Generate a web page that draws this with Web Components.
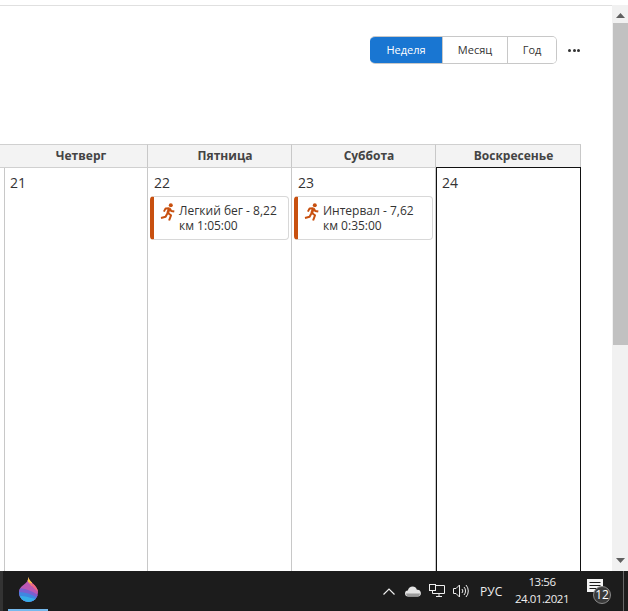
<!DOCTYPE html>
<html lang="ru">
<head>
<meta charset="utf-8">
<title>Календарь</title>
<style>
  html, body { margin: 0; height: 100%; overflow: hidden; background: #fff; }
  body { font-family: "Open Sans", "Noto Sans", sans-serif; color: #333; }
</style>
</head>
<body>
<app-screen>
  <view-switch slot="toolbar"></view-switch>
  <week-grid slot="content">
    <day-column name="" num="" clipped></day-column>
    <day-column name="Четверг" num="21"></day-column>
    <day-column name="Пятница" num="22">
      <run-event>Легкий бег - 8,22 км 1:05:00</run-event>
    </day-column>
    <day-column name="Суббота" num="23">
      <run-event>Интервал - 7,62 км 0:35:00</run-event>
    </day-column>
    <day-column name="Воскресенье" num="24" today></day-column>
  </week-grid>
  <page-scrollbar slot="scrollbar"></page-scrollbar>
  <win-taskbar slot="taskbar"></win-taskbar>
</app-screen>

<script>
// Outer frame: page area with scrollbar above the Windows taskbar
class AppScreen extends HTMLElement {
    constructor() {
        super();
        this.attachShadow({ mode: 'open' }).innerHTML = `
            <style>
                :host { display: flex; flex-direction: column; width: 628px; height: 611px; }
                .top { flex: 1; min-height: 0; display: flex; }
                .page { flex: 1; min-width: 0; display: flex; flex-direction: column; overflow: hidden; border-top: 1px solid #e0e0e0; margin-top: 5px; }
                .tools { height: 138px; flex: none; padding: 30px 32px 0 0; box-sizing: border-box; display: flex; justify-content: flex-end; align-items: flex-start; }
                .body { flex: 1; min-height: 0; }
            </style>
            <div class="top">
                <div class="page">
                    <div class="tools"><slot name="toolbar"></slot></div>
                    <div class="body"><slot name="content"></slot></div>
                </div>
                <slot name="scrollbar"></slot>
            </div>
            <slot name="taskbar"></slot>
        `;
    }
}

class ViewSwitch extends HTMLElement {
    constructor() {
        super();
        this.attachShadow({ mode: 'open' }).innerHTML = `
            <style>
                :host { display: flex; align-items: center; font: 11px "Open Sans", sans-serif; color: #333; }
                .group { display: flex; height: 28px; border: 1px solid #c8c8c8; border-left: 0; border-radius: 5px; box-sizing: border-box; overflow: hidden; }
                .group span { display: flex; align-items: center; justify-content: center; box-sizing: border-box; background: #fff; padding: 0 0 2px 0; }
                .group span + span { border-left: 1px solid #c8c8c8; }
                .active { background: #1976d2 !important; color: #fff; margin: -1px 0; }
                .more { display: flex; gap: 1.5px; margin-left: 11px; }
                .more i { width: 3px; height: 3px; border-radius: 50%; background: #333; }
            </style>
            <div class="group">
                <span class="active" style="width:72px">Неделя</span>
                <span style="width:65px">Месяц</span>
                <span style="width:49px">Год</span>
            </div>
            <div class="more"><i></i><i></i><i></i></div>
        `;
    }
}

class WeekGrid extends HTMLElement {
    constructor() {
        super();
        this.attachShadow({ mode: 'open' }).innerHTML = `
            <style>
                :host { display: flex; height: 100%; width: 581px; }
            </style>
            <slot></slot>
        `;
    }
}

class DayColumn extends HTMLElement {
    constructor() {
        super();
        const name = this.getAttribute('name');
        const num = this.getAttribute('num');
        this.attachShadow({ mode: 'open' }).innerHTML = `
            <style>
                :host { display: flex; flex-direction: column; width: 144px; box-sizing: border-box; }
                :host([clipped]) { width: 4px; }
                :host([today]) { width: 145px; }
                .head { height: 24px; box-sizing: border-box; border: solid #d0d0d0; border-width: 1px 1px 1px 0; border-right-color: #c8c8c8; background: #f3f3f3; padding-left: 11px;
                    font: 700 12px/21px "Open Sans", sans-serif; color: #444; text-align: center; white-space: nowrap; overflow: hidden; }
                .cell { flex: 1; box-sizing: border-box; padding: 6px 2px 0 2px; border-right: 1px solid #c8c8c8; }
                .num { font: 14px/18px "Open Sans", sans-serif; color: #333; padding-left: 4px; height: 22px; }
                :host([today]) .cell { border: 1px solid #111; border-bottom: 0; margin-top: -1px; padding: 6px 1px 0 1px; position: relative; }
            </style>
            <div class="head">${name}</div>
            <div class="cell">
                ${num ? `<div class="num">${num}</div>` : ''}
                <slot></slot>
            </div>
        `;
    }
}

class RunEvent extends HTMLElement {
    constructor() {
        super();
        this.attachShadow({ mode: 'open' }).innerHTML = `
            <style>
                :host { display: flex; height: 44px; box-sizing: border-box; border: 1px solid #d8d8d8; border-left: 4px solid #c8500f; border-radius: 4px; background: #fff; padding: 6px 4px 0 6px; gap: 4px;
                    font: 12px/15px "Open Sans", sans-serif; color: #333; }
                svg { flex: none; width: 15px; height: 18px; }
            </style>
            <svg viewBox="0 0 15 18" fill="none" stroke="#c8500f" stroke-width="2" stroke-linejoin="round">
                <circle cx="10.800" cy="2.200" r="2" fill="#c8500f" stroke="none"/>
                <path stroke-width="2.800" d="M9.300 5.400L7.700 10.200"/>
                <path d="M9.600 5.200L5.600 5.400 3.900 8.600M9.800 5.600L11.200 8 14.300 8.600"/>
                <path d="M7.500 9.800L11 12.300 9.100 17.500M7.300 10.500L5.600 13.800 1 15"/>
            </svg>
            <div><slot></slot></div>
        `;
    }
}

class PageScrollbar extends HTMLElement {
    constructor() {
        super();
        this.attachShadow({ mode: 'open' }).innerHTML = `
            <style>
                :host { display: flex; flex-direction: column; width: 16px; background: #f1f1f1; margin-top: 5px; }
                .arrow { height: 18px; padding-top: 2px; box-sizing: border-box; display: flex; align-items: center; justify-content: center; flex: none; }
                .arrow.down { padding: 0 0 3px; }
                .thumb { height: 322px; background: #c1c1c1; flex: none; margin-left: 1px; }
                .track { flex: 1; }
            </style>
            <div class="arrow"><svg width="9" height="5"><path d="M4.500 0L9 5H0z" fill="#606060"/></svg></div>
            <div class="thumb"></div>
            <div class="track"></div>
            <div class="arrow down"><svg width="9" height="5"><path d="M0 0H9L4.500 5z" fill="#606060"/></svg></div>
        `;
    }
}

class WinTaskbar extends HTMLElement {
    constructor() {
        super();
        this.attachShadow({ mode: 'open' }).innerHTML = `
            <style>
                :host { display: flex; align-items: center; height: 40px; flex: none; background: #1c1c1c; color: #eee; font: 12px "Open Sans", sans-serif; }
                .edge { width: 3px; align-self: stretch; background: #333; }
                .app { width: 40px; height: 40px; margin-left: 5px; box-sizing: border-box; border-bottom: 2px solid #76b9ed; display: flex; align-items: center; justify-content: center; padding-bottom: 2px; }
                .tray { margin-left: auto; display: flex; align-items: center; align-self: stretch; }
                svg { display: block; flex: none; }
                .lang { margin-left: 11px; width: 22px; white-space: nowrap; }
                .clock { margin-left: 12px; width: 56px; padding-bottom: 2px; text-align: center; line-height: 17px; font-size: 11.5px; letter-spacing: -.45px; }
                .note { position: relative; margin: 0 14px 0 17px; width: 22px; height: 24px; }
                .badge { position: absolute; left: 6px; top: 7px; width: 18px; height: 18px; line-height: 16px; border-radius: 50%; border: 1px solid #8a8a8a; background: #3a3a3a; font-size: 12px; text-align: center; box-sizing: border-box; color: #fff; }
                .desk { width: 1px; align-self: stretch; background: #666; margin-right: 4px; }
            </style>
            <div class="edge"></div>
            <div class="app">
                <svg width="19" height="25" viewBox="0 0 19 25">
                    <defs>
                        <clipPath id="d"><path d="M9.300 0c.7 2.800 2.400 4.300 4.700 6.600 3 3 5 5.700 5 8.900a9.500 9.500 0 0 1-19 0c0-3.800 2.500-6.300 5-8 2.600-1.800 4.300-3.700 4.300-7.500z"/></clipPath>
                    </defs>
                    <g clip-path="url(#d)">
                        <rect width="19" height="25" fill="#bb58b4"/>
                        <path d="M6 0h7v9l-3-3z" fill="#f9c846"/>
                        <path d="M9 5l10 4v6z" fill="#f06a7e"/>
                        <path d="M0 11c6 .5 12 2.500 19 7v7H0z" fill="#7a5fd0"/>
                        <path d="M0 15c6 0 12 2 19 6v4H0z" fill="#3f86e0"/>
                        <path d="M0 19c6 0 11 1.500 19 4v2H0z" fill="#36aee8"/>
                    </g>
                </svg>
            </div>
            <div class="tray">
                <svg width="12" height="7" viewBox="0 0 12 7"><path d="M.5 6.500L6 1l5.500 5.500" fill="none" stroke="#eee" stroke-width="1.200"/></svg>
                <svg style="margin-left:10px" width="16" height="11" viewBox="0 0 16 11"><path d="M3.300 10.500a3 3 0 0 1-.5-6C3.500 2 5.300.5 7.600.5c2.100 0 3.600 1.200 4.300 3.200a3.400 3.400 0 0 1 1 6.800z" fill="#e4e4e4"/><path d="M1 7.500h14a3 3 0 0 1-2.100 3H3.300A3 3 0 0 1 1 7.500z" fill="#9a9a9a"/></svg>
                <svg style="margin-left:8px" width="16" height="14" viewBox="0 0 16 14" fill="none" stroke="#eee"><path d="M4.500 1.500H15.500V9.500H4.500M7 12.500h6M10 9.500v3"/><rect x="0.500" y="0.500" width="6" height="6" fill="#1c1c1c"/><path d="M3.500 6.500v3h2"/></svg>
                <svg style="margin-left:8px" width="16" height="14" viewBox="0 0 16 14" fill="none" stroke="#eee"><path d="M.5 4.500h2.500l3.500-3.500v12l-3.500-3.500h-2.500z"/><path d="M9 5a3 3 0 0 1 0 4M11 3a6 6 0 0 1 0 8M13 1a9 9 0 0 1 0 12"/></svg>
                <span class="lang">РУС</span>
                <div class="clock">13:56<br>24.01.2021</div>
                <div class="note">
                    <svg width="16" height="13" viewBox="0 0 16 13"><path d="M0 0h16v13H0z" fill="#f4f4f4"/><path d="M2.500 3.500h11M2.500 6.500h11M2.500 9.500h7" stroke="#1c1c1c"/></svg>
                    <div class="badge">12</div>
                </div>
                <div class="desk"></div>
            </div>
        `;
    }
}

customElements.define('app-screen', AppScreen);
customElements.define('view-switch', ViewSwitch);
customElements.define('week-grid', WeekGrid);
customElements.define('day-column', DayColumn);
customElements.define('run-event', RunEvent);
customElements.define('page-scrollbar', PageScrollbar);
customElements.define('win-taskbar', WinTaskbar);
</script>
</body>
</html>
